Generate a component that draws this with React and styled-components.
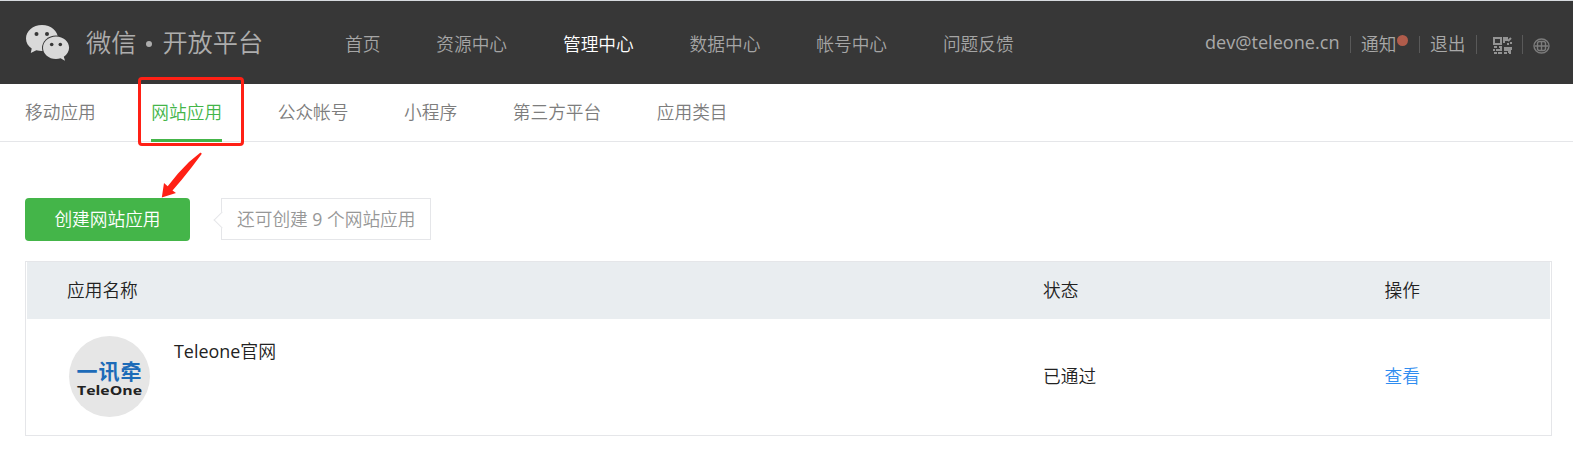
import React from 'react';
import styled, { createGlobalStyle } from 'styled-components';

const Global = createGlobalStyle`
  * { box-sizing: border-box; }
  body { margin: 0; background: #fff; font: 17.7px/26px "Open Sans", "Noto Sans CJK SC DemiLight", "Noto Sans CJK SC", sans-serif; color: #222; }
  a { color: inherit; text-decoration: none; }
`;
const Page = styled.div`
  position: relative;
  height: 466px;
  overflow: hidden;
  white-space: nowrap;
`;
const Header = styled.header`
  display: flex;
  align-items: center;
  height: 84px;
  padding: 4px 23px 0 25px;
  background: #373737;
  border-top: 1px solid #d6dade;
`;
const LogoMark = styled.svg`
  flex: none;
  width: 46px;
  height: 38px;
  margin-top: -4px;
`;
const Brand = styled.div`
  width: 259px;
  margin: -6px 0 0 15px;
  color: #adadad;
  font-size: 25.2px;
  line-height: 36px;
`;
const Dot = styled.span`
  display: inline-block;
  width: 6px;
  height: 6px;
  margin: 0 10px 5px 10px;
  border-radius: 50%;
  background: currentColor;
`;
const Nav = styled.nav`
  display: flex;
  gap: 55.9px;
  margin-top: -2px;
`;
const NavLink = styled.a`
  color: ${(p) => (p.$active ? '#fff' : '#a5a5a5')};
`;
const Account = styled.div`
  display: flex;
  align-items: center;
  margin-left: auto;
  color: #a9a9a9;
`;
const Email = styled.a`
  width: 135px;
  margin-top: -6px;
  font-size: 18.1px;
`;
const Divider = styled.i`
  width: 1px;
  height: ${(p) => p.$h || 17}px;
  margin: 0 ${(p) => p.$r}px 0 ${(p) => p.$l}px;
  background: #595959;
`;
const Notice = styled.a`
  position: relative;
  width: 35px;
  margin-top: -2px;
  &::after {
    content: '';
    position: absolute;
    left: 36px;
    top: 4px;
    width: 11px;
    height: 11px;
    border-radius: 50%;
    background: #b05c4b;
  }
`;
const Logout = styled.a`
  width: 35px;
  margin-top: -2px;
`;
const Glyph = styled.svg`
  display: block;
  flex: none;
  margin-top: 2px;
`;
const Tabs = styled.nav`
  display: flex;
  gap: 55.6px;
  height: 58px;
  padding-left: 25px;
  border-bottom: 1px solid #e5e6e9;
  color: #7d7d7d;
`;
const Tab = styled.a`
  height: 58px;
  line-height: 56px;
  ${(p) => p.$active && 'color: #44b549; border-bottom: 3px solid #44b549;'}
`;
const Main = styled.main`
  padding: 56px 21px 0 25px;
`;
const Actions = styled.div`
  display: flex;
  align-items: flex-start;
  gap: 31px;
  height: 63px;
`;
const CreateButton = styled.button`
  width: 165px;
  height: 43px;
  padding: 0 0 2px;
  border: 0;
  border-radius: 4px;
  background: #44b549;
  color: #fff;
  font: inherit;
`;
const Hint = styled.div`
  position: relative;
  width: 210px;
  height: 42px;
  padding-left: 15px;
  border: 1px solid #e5e6e9;
  color: #979797;
  line-height: 40px;
  &::before {
    content: '';
    position: absolute;
    left: -6px;
    top: 15px;
    width: 11px;
    height: 11px;
    background: #fff;
    border: solid #e5e6e9;
    border-width: 0 0 1px 1px;
    transform: rotate(45deg);
  }
`;
const Table = styled.section`
  height: 175px;
  padding: 0 1px;
  border: 1px solid #e5e6e9;
`;
const Row = styled.div`
  display: grid;
  grid-template-columns: 976px 341.500px 1fr;
  align-items: center;
  height: ${(p) => (p.$head ? 57 : 115)}px;
  padding-left: 40px;
  background: ${(p) => (p.$head ? '#e9edf0' : '#fff')};
`;
const Cell = styled.span`
  padding-bottom: 2px;
`;
const AppCell = styled.div`
  display: flex;
  gap: 24px;
  padding-left: 2px;
`;
const AppName = styled.span`
  padding-top: 2px;
  font-size: 17.9px;
`;
const AppLogo = styled.div`
  display: flex;
  flex-direction: column;
  align-items: center;
  width: 81px;
  height: 81px;
  padding-top: 23px;
  border-radius: 50%;
  background: #e6e6e6;
`;
const LogoTitle = styled.b`
  color: #1d6bb8;
  font-family: "Noto Sans CJK SC", sans-serif;
  font-weight: 700;
  font-size: 21px;
  line-height: 22px;
  letter-spacing: 1px;
`;
const LogoSub = styled.svg`
  width: 66px;
  height: 14px;
  overflow: visible;
`;
const ViewLink = styled.a`
  padding-bottom: 2px;
  color: #2f8df0;
`;
const HighlightBox = styled.div`
  position: absolute;
  left: 138px;
  top: 77px;
  width: 106px;
  height: 69px;
  border: 3px solid #ff2015;
  border-radius: 4px;
`;
const Arrow = styled.svg`
  position: absolute;
  left: 160px;
  top: 151px;
`;

export default function App() {
  return (
    <Page>
      <Global />
      <Header>
        <LogoMark viewBox="0 0 46 38">
          <path fill="#d9d9d9" d="M17 1C8 1 1 6.900 1 14.500c0 4.200 2.100 7.600 5.700 10.100L5.800 29l5.500-2.700c2 .5 3.700.8 5.700.8 9 0 16-5.400 16-12.600S26 1 17 1z" />
          <ellipse cx="31" cy="24" rx="14" ry="12.500" fill="#373737" />
          <path fill="#d9d9d9" d="M31 12.500c-7.300 0-13 5-13 11.200S23.700 35 31 35c1.600 0 3.100-.3 4.600-.7l4.400 2.400-1.200-3.900c3.200-2.400 5.300-5.500 5.300-9.100 0-6.200-5.800-11.200-13.100-11.200z" />
          <g fill="#373737"><circle cx="11.500" cy="10" r="2" /><circle cx="22" cy="10" r="2" /><circle cx="26.700" cy="20.500" r="1.800" /><circle cx="35.300" cy="20.500" r="1.800" /></g>
        </LogoMark>
        <Brand>微信<Dot />开放平台</Brand>
        <Nav>
          {['首页', '资源中心', '管理中心', '数据中心', '帐号中心', '问题反馈'].map((t) => (
            <NavLink key={t} $active={t === '管理中心'}>{t}</NavLink>
          ))}
        </Nav>
        <Account>
          <Email>dev@teleone.cn</Email>
          <Divider $l={10} $r={10} />
          <Notice>通知</Notice>
          <Divider $l={23} $r={10} />
          <Logout>退出</Logout>
          <Divider $l={11} $r={16} $h={19} />
          <Glyph width="20" height="18" viewBox="0 0 20 18">
            <g fill="none" stroke="#949494" strokeWidth="2">
              <path d="M1 1h7v6H1z" />
              <path d="M10 1h4v2h-3v3M15 4l3-3M14 7h2M17 6h2M1 10h3M6 10h2v3H3M1 12v2M1 16h3M5 16h3v-1M12 11h5v2h-5zM11 16h3M15 15h2v2M18 10v3" />
            </g>
          </Glyph>
          <Divider $l={9} $r={10} $h={19} />
          <Glyph width="17" height="16" viewBox="0 0 17 16">
            <g fill="none" stroke="#7c7c7c" strokeWidth="1.400"><ellipse cx="8.500" cy="8" rx="7.500" ry="7" /><rect x="4.500" y="3.500" width="8" height="9" rx="2" /><path d="M8.500 3v10M2 8h13" /></g>
          </Glyph>
        </Account>
      </Header>
      <Tabs>
        {['移动应用', '网站应用', '公众帐号', '小程序', '第三方平台', '应用类目'].map((t) => (
          <Tab key={t} $active={t === '网站应用'}>{t}</Tab>
        ))}
      </Tabs>
      <Main>
        <Actions>
          <CreateButton>创建网站应用</CreateButton>
          <Hint>还可创建 9 个网站应用</Hint>
        </Actions>
        <Table>
          <Row $head><Cell>应用名称</Cell><Cell>状态</Cell><Cell>操作</Cell></Row>
          <Row>
            <AppCell>
              <AppLogo>
                <LogoTitle>一讯牵</LogoTitle>
                <LogoSub viewBox="0 0 66 14"><text x="0" y="13.500" textLength="65" lengthAdjust="spacingAndGlyphs" fontFamily="Open Sans, sans-serif" fontWeight="700" fontSize="12" fill="#222">TeleOne</text></LogoSub>
              </AppLogo>
              <AppName>Teleone官网</AppName>
            </AppCell>
            <Cell>已通过</Cell>
            <ViewLink>查看</ViewLink>
          </Row>
        </Table>
      </Main>
      <HighlightBox />
      <Arrow width="44" height="48" viewBox="0 0 44 48">
        <path fill="#ff2015" d="M40.200 1.800Q42.200 1.500 41.500 3.300L31.500 16.500 21.500 29 12.500 39.500 16 42 1.800 46.500 4 32 7.700 35.300 18 22.500 29 11z" />
      </Arrow>
    </Page>
  );
}
